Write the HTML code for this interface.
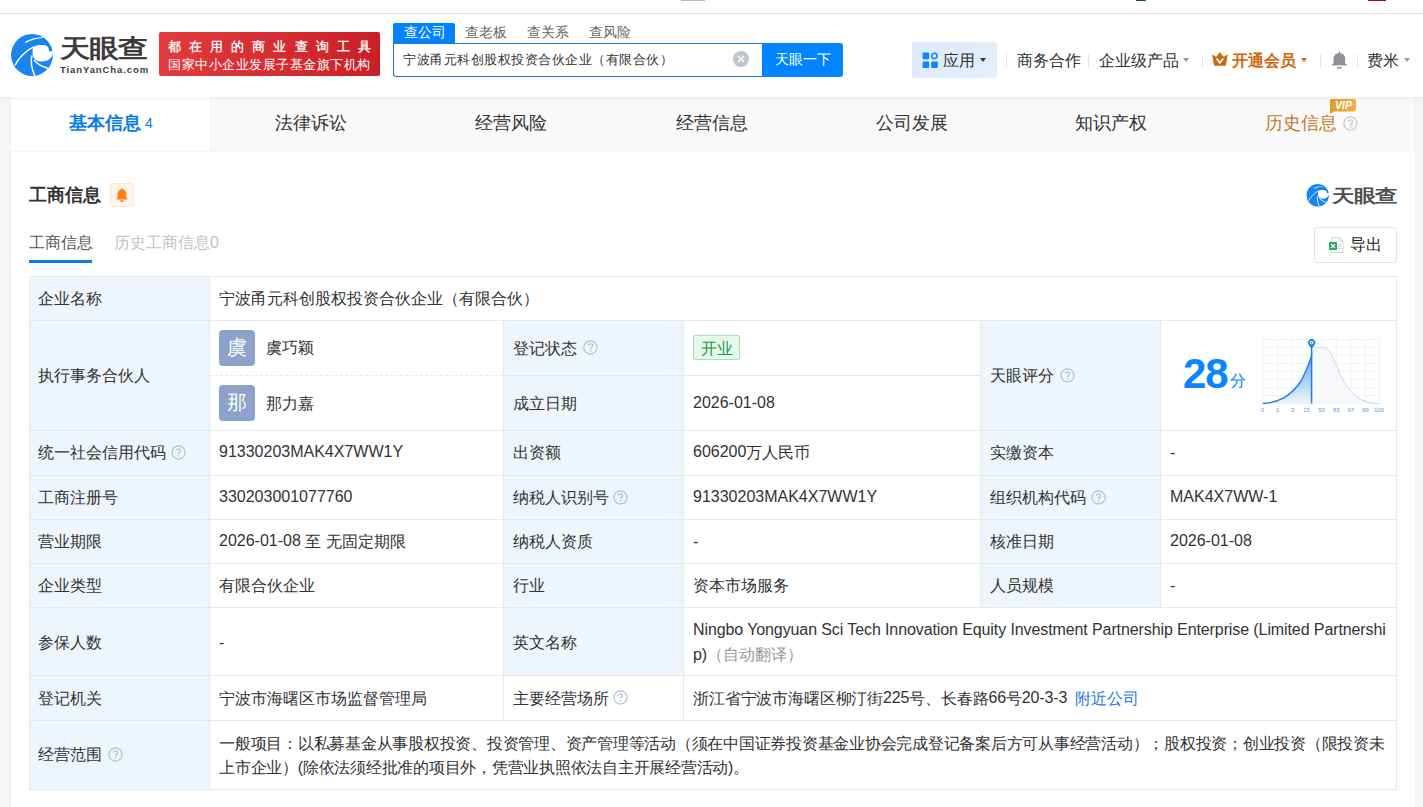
<!DOCTYPE html>
<html><head><meta charset="utf-8">
<style>
*{margin:0;padding:0;box-sizing:border-box}
html,body{width:1423px;height:807px;overflow:hidden;background:#f5f5f5;font-family:"Liberation Sans",sans-serif;color:#333}
.a{position:absolute;white-space:nowrap}
.l{position:relative;top:-1px}
#top{position:absolute;left:0;top:0;width:1423px;height:97px;background:#fff;box-shadow:0 1px 5px rgba(0,0,0,.07);z-index:2}
#topline{position:absolute;left:0;top:13px;width:1423px;height:1px;background:#e2e2e2}
</style></head><body>


<div id="top">
  <div id="topline"></div>
  <div class="a" style="left:681px;top:0;width:24px;height:1px;background:#bbb"></div>
  <div class="a" style="left:1136px;top:0;width:10px;height:1px;background:#1a5a1a"></div>
  <div class="a" style="left:1368px;top:0;width:18px;height:1px;background:#8a1515"></div>

  <!-- logo -->
  <svg class="a" style="left:10px;top:32px" width="45" height="45" viewBox="0 0 45 45">
<circle cx="22" cy="23" r="21" fill="#1a85f1"/>
<path d="M23.4 15 C26 13.2 31 12.7 35.7 13.4 C38 14 39.2 16.5 38.9 19.2 L45 19.2 L45 21.6 L43 21.7 C42 25.5 38.5 29 32.3 29.6 C28.5 29.9 25 28.5 23.4 25 C22.2 22.5 22.2 18 23.4 15 Z" fill="#fff"/>
<path d="M5 33.5 C8 27 15 19 23.6 14.8" fill="none" stroke="#fff" stroke-width="1.5"/>
<path d="M22 23.4 C21 27 21 35 24.8 44" fill="none" stroke="#fff" stroke-width="1.5"/>
<path d="M24 27.9 C26 30.5 31 34.5 38.5 36.5" fill="none" stroke="#fff" stroke-width="1.5"/>
<path d="M14.6 9.9 C20 6.8 27 5 34.2 5.2 L34 5.8 C27 6.3 21 8.3 15.8 11 Z" fill="#fff"/>
</svg>
  <div class="a" style="left:60px;top:35px;font-size:30px;line-height:32px;font-weight:bold;color:#3e3a39;letter-spacing:-1px;transform:scaleY(0.83);transform-origin:0 0">天眼查</div>
  <div class="a" style="left:60px;top:64px;font-size:9.5px;line-height:11px;font-weight:bold;color:#3e3a39;letter-spacing:0.9px">TianYanCha.com</div>

  <!-- red banner -->
  <div class="a" style="left:159px;top:32px;width:221px;height:44px;border-radius:2px;background:linear-gradient(90deg,#e33a40,#c91f26)"></div>
  <div class="a" style="left:168px;top:39px;font-size:13px;line-height:16px;color:#fff;letter-spacing:8.1px;-webkit-text-stroke:0.3px #fff">都在用的商业查询工具</div>
  <div class="a" style="left:168px;top:57px;font-size:13px;line-height:16px;color:#fff;letter-spacing:0.5px">国家中小企业发展子基金旗下机构</div>

  <!-- search tabs -->
  <div class="a" style="left:393px;top:23px;width:62px;height:21px;background:#0084ff;border-radius:2px 2px 0 0"></div>
  <div class="a" style="left:404px;top:24px;font-size:13.5px;line-height:18px;color:#fff">查公司</div>
  <div class="a" style="left:465px;top:24px;font-size:13.5px;line-height:18px;color:#666">查老板</div>
  <div class="a" style="left:527px;top:24px;font-size:13.5px;line-height:18px;color:#666">查关系</div>
  <div class="a" style="left:589px;top:24px;font-size:13.5px;line-height:18px;color:#666">查风险</div>
  <div class="a" style="left:393px;top:43px;width:372px;height:34px;border:1px solid #2676cc;border-right:none;border-radius:0 0 0 3px;background:#fff"></div>
  <div class="a" style="left:403px;top:50px;font-size:13px;line-height:20px;color:#333;letter-spacing:0.5px">宁波甬元科创股权投资合伙企业（有限合伙）</div>
  <svg class="a" style="left:733px;top:51px" width="16" height="16" viewBox="0 0 16 16"><circle cx="8" cy="8" r="8" fill="#c0c4cc"/><path d="M5 5L11 11M11 5L5 11" stroke="#fff" stroke-width="1.5"/></svg>
  <div class="a" style="left:762px;top:43px;width:81px;height:34px;background:#0084ff;border-radius:0 3px 3px 0"></div>
  <div class="a" style="left:775px;top:49px;font-size:14px;line-height:20px;color:#fff">天眼一下</div>

  <!-- right nav -->
  <div class="a" style="left:912px;top:42px;width:85px;height:36px;border-radius:3px;background:linear-gradient(160deg,#dbe9fb,#e6f0fc)"></div>
  <svg class="a" style="left:922px;top:52px" width="17" height="17" viewBox="0 0 17 17"><g transform="translate(0.6,0.6)" fill="#0a84ff">
    <rect x="0" y="0" width="6.6" height="6.6" rx="1.3"/>
    <circle cx="11.7" cy="3.3" r="2.65" fill="none" stroke="#0a84ff" stroke-width="1.5"/>
    <rect x="0" y="8.8" width="6.6" height="6.6" rx="1.3"/>
    <rect x="8.6" y="8.8" width="6.6" height="6.6" rx="1.3"/>
  </g></svg>
  <div class="a" style="left:943px;top:50px;font-size:16px;line-height:22px;color:#333">应用</div>
  <div class="a" style="left:980px;top:58px;width:0;height:0;border-left:3.5px solid transparent;border-right:3.5px solid transparent;border-top:4px solid #333"></div>
  <div class="a" style="left:1006px;top:54px;width:1px;height:13px;background:#e5e5e5"></div>
  <div class="a" style="left:1017px;top:50px;font-size:16px;line-height:22px;color:#333">商务合作</div>
  <div class="a" style="left:1088px;top:54px;width:1px;height:13px;background:#e5e5e5"></div>
  <div class="a" style="left:1099px;top:50px;font-size:16px;line-height:22px;color:#333">企业级产品</div>
  <div class="a" style="left:1183px;top:58px;width:0;height:0;border-left:3.5px solid transparent;border-right:3.5px solid transparent;border-top:4px solid #999"></div>
  <div class="a" style="left:1202px;top:54px;width:1px;height:13px;background:#e5e5e5"></div>
  <svg class="a" style="left:1212px;top:52px" width="16" height="14" viewBox="0 0 16 14">
    <path d="M0.4 3 L4.2 5.2 L7.8 0.4 L11.6 5.2 L15.4 3 L13.5 13.3 Q13.4 13.6 13 13.6 L2.9 13.6 Q2.5 13.6 2.4 13.3 Z" fill="#d0660c" stroke="#d0660c" stroke-width="0.6" stroke-linejoin="round"/>
    <path d="M4.6 6.6 L7.8 10.8 L11.2 6.6" stroke="#fff" stroke-width="1.7" fill="none"/>
  </svg>
  <div class="a" style="left:1232px;top:50px;font-size:16px;line-height:22px;color:#d0680c;font-weight:bold">开通会员</div>
  <div class="a" style="left:1301px;top:58px;width:0;height:0;border-left:3.5px solid transparent;border-right:3.5px solid transparent;border-top:4px solid #d0680c"></div>
  <div class="a" style="left:1320px;top:54px;width:1px;height:13px;background:#e5e5e5"></div>
  <svg class="a" style="left:1332px;top:51px" width="15" height="18" viewBox="0 0 15 18"><g fill="#8e9197">
    <path d="M1.5 13.2 L1.5 7.6 C1.5 4.2 4.1 1.9 7.35 1.9 C10.6 1.9 13.2 4.2 13.2 7.6 L13.2 13.2 Z"/>
    <rect x="0.1" y="12.9" width="14.6" height="1.5"/>
    <rect x="6.8" y="0.1" width="1.1" height="2.5"/>
    <rect x="5" y="15.9" width="4.7" height="1.7"/>
  </g></svg>
  <div class="a" style="left:1357px;top:54px;width:1px;height:13px;background:#e5e5e5"></div>
  <div class="a" style="left:1367px;top:50px;font-size:16px;line-height:22px;color:#333">费米</div>
  <div class="a" style="left:1404px;top:58px;width:0;height:0;border-left:3.5px solid transparent;border-right:3.5px solid transparent;border-top:4px solid #999"></div>
</div>

<!-- main tabs -->
<div class="a" style="left:11px;top:97px;width:1404px;height:710px;background:#fff;box-shadow:0 0 3px rgba(0,0,0,.05)"></div>
<div class="a" style="left:210px;top:97px;width:1205px;height:54px;background:#f9f9f9;border-left:1px solid #f0f0f0"></div>
<div class="a" style="left:11px;top:151px;width:1404px;height:1px;background:#f4f4f4"></div>

<div class="a" style="left:69px;top:111px;font-size:18px;line-height:24px;color:#0a7ce8;font-weight:bold">基本信息</div>
<div class="a" style="left:145px;top:114px;font-size:14px;line-height:18px;color:#0a7ce8">4</div>
<div class="a" style="left:275px;top:111px;font-size:18px;line-height:24px;color:#333">法律诉讼</div>
<div class="a" style="left:475px;top:111px;font-size:18px;line-height:24px;color:#333">经营风险</div>
<div class="a" style="left:676px;top:111px;font-size:18px;line-height:24px;color:#333">经营信息</div>
<div class="a" style="left:876px;top:111px;font-size:18px;line-height:24px;color:#333">公司发展</div>
<div class="a" style="left:1075px;top:111px;font-size:18px;line-height:24px;color:#333">知识产权</div>
<div class="a" style="left:1265px;top:111px;font-size:18px;line-height:24px;color:#c87a2a">历史信息</div>

<svg class="a" style="left:1328px;top:98px" width="29" height="17" viewBox="0 0 29 17"><defs><linearGradient id="vg" x1="0" y1="0" x2="1" y2="0"><stop offset="0" stop-color="#e49a2c"/><stop offset="1" stop-color="#f0b04a"/></linearGradient></defs><path d="M3 1 L26 1 Q28 1 28 3 L28 11 Q28 13.4 26 13.4 L6 13.4 L2 16 L2 3 Q2 1 3 1Z" fill="url(#vg)"/><text x="15.5" y="11.3" font-family="Liberation Sans" font-weight="bold" font-style="italic" font-size="10.5" fill="#fff" text-anchor="middle">VIP</text></svg>
<svg class="a" style="left:1343px;top:116px" width="15" height="15" viewBox="0 0 15 15"><circle cx="7.5" cy="7.5" r="6.6" fill="none" stroke="#c3c9d1" stroke-width="1.2"/><path d="M5.4 5.8C5.4 4.6 6.3 3.8 7.5 3.8C8.7 3.8 9.6 4.6 9.6 5.7C9.6 7.1 7.6 7.3 7.6 8.9" fill="none" stroke="#c3c9d1" stroke-width="1.2"/><circle cx="7.6" cy="10.9" r="0.8" fill="#c3c9d1"/></svg>
<!-- card -->

<div id="content">
<div class="a t" style="left:29px;top:183px;font-size:18px;line-height:24px;font-weight:bold;color:#333">工商信息</div>
<div class="a" style="left:110px;top:183px;width:24px;height:24px;border-radius:3px;background:#fff4ea;border:1px solid #fde7d4"></div>
<svg class="a" style="left:116px;top:188px" width="12" height="14" viewBox="0 0 12 14"><path d="M6 0.3C6.7 0.3 7 0.8 7 1.3C9.4 1.9 10.4 4 10.4 6.6L10.4 9.8L11.8 11.5L0.2 11.5L1.6 9.8L1.6 6.6C1.6 4 2.6 1.9 5 1.3C5 0.8 5.3 0.3 6 0.3Z" fill="#ff7f0a"/><path d="M4.2 12.3L7.8 12.3C7.8 13.3 7 13.9 6 13.9C5 13.9 4.2 13.3 4.2 12.3Z" fill="#ff7f0a"/></svg>
<svg class="a" style="left:1306px;top:183px" width="24" height="24" viewBox="0 0 45 45">
<circle cx="22" cy="23" r="21" fill="#1a85f1"/>
<path d="M23.4 15 C26 13.2 31 12.7 35.7 13.4 C38 14 39.2 16.5 38.9 19.2 L45 19.2 L45 21.6 L43 21.7 C42 25.5 38.5 29 32.3 29.6 C28.5 29.9 25 28.5 23.4 25 C22.2 22.5 22.2 18 23.4 15 Z" fill="#fff"/>
<path d="M5 33.5 C8 27 15 19 23.6 14.8" fill="none" stroke="#fff" stroke-width="1.5"/>
<path d="M22 23.4 C21 27 21 35 24.8 44" fill="none" stroke="#fff" stroke-width="1.5"/>
<path d="M24 27.9 C26 30.5 31 34.5 38.5 36.5" fill="none" stroke="#fff" stroke-width="1.5"/>
<path d="M14.6 9.9 C20 6.8 27 5 34.2 5.2 L34 5.8 C27 6.3 21 8.3 15.8 11 Z" fill="#fff"/>
</svg>
<div class="a t" style="left:1332px;top:183px;font-size:22px;line-height:26px;font-weight:bold;color:#505050;letter-spacing:-0.5px;transform:scaleY(0.8);transform-origin:0 50%">天眼查</div>
<div class="a t" style="left:29px;top:233px;font-size:16px;line-height:20px;color:#555">工商信息</div>
<div class="a" style="left:29px;top:260px;width:63px;height:3px;background:#0a7ce5"></div>
<div class="a t" style="left:114px;top:233px;font-size:16px;line-height:20px;color:#bfc1c6">历史工商信息0</div>
<div class="a" style="left:1314px;top:227px;width:83px;height:36px;border:1px solid #e1e4ea;border-radius:3px;background:#fff"></div>
<svg class="a" style="left:1328px;top:237px" width="16" height="16" viewBox="0 0 16 16"><path d="M3.5 0.5L11.5 0.5L15 4L15 15.5L3.5 15.5Z" fill="#fff" stroke="#d0d3d8"/><path d="M11.5 0.5L11.5 4L15 4" fill="none" stroke="#d0d3d8"/><rect x="10" y="7" width="3.5" height="1" fill="#d0d3d8"/><rect x="10" y="9" width="3.5" height="1" fill="#d0d3d8"/><rect x="10" y="11" width="3.5" height="1" fill="#d0d3d8"/><rect x="1" y="5" width="8" height="8" rx="0.8" fill="#2aa56a"/><path d="M3 7L7 11M7 7L3 11" stroke="#e8fff2" stroke-width="1.1"/></svg>
<div class="a t" style="left:1350px;top:235px;font-size:16px;line-height:20px;color:#222">导出</div>
<div class="a" style="left:29px;top:276px;width:180px;height:513px;background:#eef5fd"></div>
<div class="a" style="left:503px;top:320px;width:180px;height:355px;background:#eef5fd"></div>
<div class="a" style="left:980px;top:320px;width:180px;height:287px;background:#eef5fd"></div>
<div class="a" style="left:29px;top:276px;width:1368px;height:1px;background:#e4e9f0"></div>
<div class="a" style="left:29px;top:320px;width:1368px;height:1px;background:#e4e9f0"></div>
<div class="a" style="left:29px;top:430px;width:1368px;height:1px;background:#e4e9f0"></div>
<div class="a" style="left:29px;top:475px;width:1368px;height:1px;background:#e4e9f0"></div>
<div class="a" style="left:29px;top:519px;width:1368px;height:1px;background:#e4e9f0"></div>
<div class="a" style="left:29px;top:563px;width:1368px;height:1px;background:#e4e9f0"></div>
<div class="a" style="left:29px;top:607px;width:1368px;height:1px;background:#e4e9f0"></div>
<div class="a" style="left:29px;top:675px;width:1368px;height:1px;background:#e4e9f0"></div>
<div class="a" style="left:29px;top:720px;width:1368px;height:1px;background:#e4e9f0"></div>
<div class="a" style="left:29px;top:789px;width:1368px;height:1px;background:#e4e9f0"></div>
<div class="a" style="left:210px;top:375px;width:293px;height:0;border-top:1px dashed #e2e8ef"></div>
<div class="a" style="left:503px;top:375px;width:477px;height:1px;background:#e4e9f0"></div>
<div class="a" style="left:29px;top:276px;width:1px;height:514px;background:#e4e9f0"></div>
<div class="a" style="left:1396px;top:276px;width:1px;height:514px;background:#e4e9f0"></div>
<div class="a" style="left:209px;top:276px;width:1px;height:514px;background:#e4e9f0"></div>
<div class="a" style="left:503px;top:320px;width:1px;height:400px;background:#e4e9f0"></div>
<div class="a" style="left:683px;top:320px;width:1px;height:400px;background:#e4e9f0"></div>
<div class="a" style="left:980px;top:320px;width:1px;height:287px;background:#e4e9f0"></div>
<div class="a" style="left:1160px;top:320px;width:1px;height:287px;background:#e4e9f0"></div>
<div class="a t" style="left:38px;top:289px;font-size:16px;line-height:20px;color:#333">企业名称</div>
<div class="a t" style="left:219px;top:289px;font-size:16px;line-height:20px;color:#333">宁波甬元科创股权投资合伙企业（有限合伙）</div>
<div class="a t" style="left:38px;top:366px;font-size:16px;line-height:20px;color:#333">执行事务合伙人</div>
<div class="a" style="left:219px;top:330px;width:36px;height:36px;border-radius:4px;background:#8ca2cb"></div>
<div class="a t" style="left:227px;top:336px;font-size:20px;line-height:22px;color:#fff">虞</div>
<div class="a t" style="left:266px;top:338px;font-size:16px;line-height:20px;color:#333">虞巧颖</div>
<div class="a" style="left:219px;top:385px;width:36px;height:36px;border-radius:4px;background:#8ca2cb"></div>
<div class="a t" style="left:227px;top:391px;font-size:20px;line-height:22px;color:#fff">那</div>
<div class="a t" style="left:266px;top:394px;font-size:16px;line-height:20px;color:#333">那力嘉</div>
<div class="a t" style="left:513px;top:339px;font-size:16px;line-height:20px;color:#333">登记状态</div>
<svg class="a" style="left:583px;top:340px" width="15" height="15" viewBox="0 0 15 15"><circle cx="7.5" cy="7.5" r="6.6" fill="none" stroke="#abc0d6" stroke-width="1.2"/><path d="M5.4 5.8C5.4 4.6 6.3 3.8 7.5 3.8C8.7 3.8 9.6 4.6 9.6 5.7C9.6 7.1 7.6 7.3 7.6 8.9" fill="none" stroke="#abc0d6" stroke-width="1.2"/><circle cx="7.6" cy="10.9" r="0.8" fill="#abc0d6"/></svg>
<div class="a" style="left:693px;top:335px;width:47px;height:25px;border-radius:2px;background:#e5f8e9;border:1px solid #a7dfb6"></div>
<div class="a t" style="left:701px;top:339px;font-size:16px;line-height:20px;color:#1f9a48">开业</div>
<div class="a t" style="left:513px;top:394px;font-size:16px;line-height:20px;color:#333">成立日期</div>
<div class="a t" style="left:693px;top:394px;font-size:16px;line-height:20px;color:#333"><span class="l">2026-01-08</span></div>
<div class="a t" style="left:990px;top:366px;font-size:16px;line-height:20px;color:#333">天眼评分</div>
<svg class="a" style="left:1060px;top:368px" width="15" height="15" viewBox="0 0 15 15"><circle cx="7.5" cy="7.5" r="6.6" fill="none" stroke="#abc0d6" stroke-width="1.2"/><path d="M5.4 5.8C5.4 4.6 6.3 3.8 7.5 3.8C8.7 3.8 9.6 4.6 9.6 5.7C9.6 7.1 7.6 7.3 7.6 8.9" fill="none" stroke="#abc0d6" stroke-width="1.2"/><circle cx="7.6" cy="10.9" r="0.8" fill="#abc0d6"/></svg>
<div class="a t" style="left:1183px;top:352px;font-size:42px;line-height:44px;color:#0a84ff;font-weight:bold;letter-spacing:-1px">28</div>
<div class="a t" style="left:1230px;top:371px;font-size:16px;line-height:20px;color:#0a84ff">分</div>
<svg class="a" style="left:1258px;top:335px" width="130" height="80" viewBox="0 0 130 80">
<defs><linearGradient id="bg1" x1="0" y1="0" x2="0" y2="1"><stop offset="0" stop-color="#4597ef"/><stop offset="1" stop-color="#e8f2fd"/></linearGradient></defs>
<line x1="4.8" y1="4.5" x2="4.8" y2="68.5" stroke="#edf2f8" stroke-width="0.9"/><line x1="19.5" y1="4.5" x2="19.5" y2="68.5" stroke="#edf2f8" stroke-width="0.9"/><line x1="34.5" y1="4.5" x2="34.5" y2="68.5" stroke="#edf2f8" stroke-width="0.9"/><line x1="48.6" y1="4.5" x2="48.6" y2="68.5" stroke="#edf2f8" stroke-width="0.9"/><line x1="63.5" y1="4.5" x2="63.5" y2="68.5" stroke="#edf2f8" stroke-width="0.9"/><line x1="78.4" y1="4.5" x2="78.4" y2="68.5" stroke="#edf2f8" stroke-width="0.9"/><line x1="92.8" y1="4.5" x2="92.8" y2="68.5" stroke="#edf2f8" stroke-width="0.9"/><line x1="107.4" y1="4.5" x2="107.4" y2="68.5" stroke="#edf2f8" stroke-width="0.9"/><line x1="121.5" y1="4.5" x2="121.5" y2="68.5" stroke="#edf2f8" stroke-width="0.9"/><line x1="4.8" y1="4.5" x2="121.5" y2="4.5" stroke="#edf2f8" stroke-width="0.9"/><line x1="4.8" y1="12.4" x2="121.5" y2="12.4" stroke="#edf2f8" stroke-width="0.9"/><line x1="4.8" y1="20.3" x2="121.5" y2="20.3" stroke="#edf2f8" stroke-width="0.9"/><line x1="4.8" y1="28.5" x2="121.5" y2="28.5" stroke="#edf2f8" stroke-width="0.9"/><line x1="4.8" y1="36.4" x2="121.5" y2="36.4" stroke="#edf2f8" stroke-width="0.9"/><line x1="4.8" y1="44.3" x2="121.5" y2="44.3" stroke="#edf2f8" stroke-width="0.9"/><line x1="4.8" y1="52.6" x2="121.5" y2="52.6" stroke="#edf2f8" stroke-width="0.9"/><line x1="4.8" y1="60.5" x2="121.5" y2="60.5" stroke="#edf2f8" stroke-width="0.9"/><line x1="4.8" y1="68.5" x2="121.5" y2="68.5" stroke="#edf2f8" stroke-width="0.9"/>
<path d="M53.6 21.3 C55 17 57 13.5 60 12.6 C62 12 65 12 68 13.6 C71 15.5 73 18 75 22.5 C78 29 81 38 85 45 C89 52 95 60 104 65 C111 68 116 68.5 121.5 68.5 L53.6 68.5 Z" fill="#f6f7f9" opacity="0.7"/>
<path d="M53.6 21.3 C55 17 57 13.5 60 12.6 C62 12 65 12 68 13.6 C71 15.5 73 18 75 22.5 C78 29 81 38 85 45 C89 52 95 60 104 65 C111 68 116 68.5 121.5 68.5" fill="none" stroke="#cfd8e3" stroke-width="1"/>
<path d="M4.8 68.5 C12 68.2 18 66.8 26 62.8 C34 58 39 52 43 46 C47 39 50 31 53.6 21.3 L53.6 68.5 Z" fill="url(#bg1)" opacity="0.8"/>
<path d="M4.8 68.5 C12 68.2 18 66.8 26 62.8 C34 58 39 52 43 46 C47 39 50 31 53.6 21.3" fill="none" stroke="#1a7ee8" stroke-width="1.4"/>
<line x1="53.6" y1="12" x2="53.6" y2="68.5" stroke="#1a7ee8" stroke-width="1.5"/>
<path d="M53.6 14 L50.6 9.8 A3.7 3.7 0 1 1 56.6 9.8 Z" fill="#1a7ee8"/>
<circle cx="53.6" cy="7.6" r="1.9" fill="#fff"/>
<circle cx="53.6" cy="7.6" r="0.9" fill="#1a7ee8"/>
<g font-family="Liberation Sans" font-size="6" fill="#5a9be2" text-anchor="middle">
<text x="4.5" y="77">0</text><text x="19.5" y="77">1</text><text x="34.5" y="77">3</text><text x="48.6" y="77">15</text><text x="63.5" y="77">50</text><text x="78.4" y="77">85</text><text x="92.8" y="77">97</text><text x="107.4" y="77">99</text><text x="121" y="77">100</text>
</g></svg>
<div class="a t" style="left:38px;top:443px;font-size:16px;line-height:20px;color:#333">统一社会信用代码</div>
<div class="a t" style="left:219px;top:443px;font-size:16px;line-height:20px;color:#333"><span class="l">91330203MAK4X7WW1Y</span></div>
<div class="a t" style="left:513px;top:443px;font-size:16px;line-height:20px;color:#333">出资额</div>
<div class="a t" style="left:693px;top:443px;font-size:16px;line-height:20px;color:#333"><span class="l">606200</span>万人民币</div>
<div class="a t" style="left:990px;top:443px;font-size:16px;line-height:20px;color:#333">实缴资本</div>
<div class="a t" style="left:1170px;top:443px;font-size:16px;line-height:20px;color:#333">-</div>
<svg class="a" style="left:171px;top:445px" width="15" height="15" viewBox="0 0 15 15"><circle cx="7.5" cy="7.5" r="6.6" fill="none" stroke="#abc0d6" stroke-width="1.2"/><path d="M5.4 5.8C5.4 4.6 6.3 3.8 7.5 3.8C8.7 3.8 9.6 4.6 9.6 5.7C9.6 7.1 7.6 7.3 7.6 8.9" fill="none" stroke="#abc0d6" stroke-width="1.2"/><circle cx="7.6" cy="10.9" r="0.8" fill="#abc0d6"/></svg>
<div class="a t" style="left:38px;top:488px;font-size:16px;line-height:20px;color:#333">工商注册号</div>
<div class="a t" style="left:219px;top:488px;font-size:16px;line-height:20px;color:#333"><span class="l">330203001077760</span></div>
<div class="a t" style="left:513px;top:488px;font-size:16px;line-height:20px;color:#333">纳税人识别号</div>
<div class="a t" style="left:693px;top:488px;font-size:16px;line-height:20px;color:#333"><span class="l">91330203MAK4X7WW1Y</span></div>
<div class="a t" style="left:990px;top:488px;font-size:16px;line-height:20px;color:#333">组织机构代码</div>
<div class="a t" style="left:1170px;top:488px;font-size:16px;line-height:20px;color:#333"><span class="l">MAK4X7WW-1</span></div>
<svg class="a" style="left:613px;top:490px" width="15" height="15" viewBox="0 0 15 15"><circle cx="7.5" cy="7.5" r="6.6" fill="none" stroke="#abc0d6" stroke-width="1.2"/><path d="M5.4 5.8C5.4 4.6 6.3 3.8 7.5 3.8C8.7 3.8 9.6 4.6 9.6 5.7C9.6 7.1 7.6 7.3 7.6 8.9" fill="none" stroke="#abc0d6" stroke-width="1.2"/><circle cx="7.6" cy="10.9" r="0.8" fill="#abc0d6"/></svg>
<svg class="a" style="left:1091px;top:490px" width="15" height="15" viewBox="0 0 15 15"><circle cx="7.5" cy="7.5" r="6.6" fill="none" stroke="#abc0d6" stroke-width="1.2"/><path d="M5.4 5.8C5.4 4.6 6.3 3.8 7.5 3.8C8.7 3.8 9.6 4.6 9.6 5.7C9.6 7.1 7.6 7.3 7.6 8.9" fill="none" stroke="#abc0d6" stroke-width="1.2"/><circle cx="7.6" cy="10.9" r="0.8" fill="#abc0d6"/></svg>
<div class="a t" style="left:38px;top:532px;font-size:16px;line-height:20px;color:#333">营业期限</div>
<div class="a t" style="left:219px;top:532px;font-size:16px;line-height:20px;color:#333"><span class="l">2026-01-08</span> 至 无固定期限</div>
<div class="a t" style="left:513px;top:532px;font-size:16px;line-height:20px;color:#333">纳税人资质</div>
<div class="a t" style="left:693px;top:532px;font-size:16px;line-height:20px;color:#333">-</div>
<div class="a t" style="left:990px;top:532px;font-size:16px;line-height:20px;color:#333">核准日期</div>
<div class="a t" style="left:1170px;top:532px;font-size:16px;line-height:20px;color:#333"><span class="l">2026-01-08</span></div>
<div class="a t" style="left:38px;top:576px;font-size:16px;line-height:20px;color:#333">企业类型</div>
<div class="a t" style="left:219px;top:576px;font-size:16px;line-height:20px;color:#333">有限合伙企业</div>
<div class="a t" style="left:513px;top:576px;font-size:16px;line-height:20px;color:#333">行业</div>
<div class="a t" style="left:693px;top:576px;font-size:16px;line-height:20px;color:#333">资本市场服务</div>
<div class="a t" style="left:990px;top:576px;font-size:16px;line-height:20px;color:#333">人员规模</div>
<div class="a t" style="left:1170px;top:576px;font-size:16px;line-height:20px;color:#333">-</div>
<div class="a t" style="left:38px;top:633px;font-size:16px;line-height:20px;color:#333">参保人数</div>
<div class="a t" style="left:219px;top:633px;font-size:16px;line-height:20px;color:#333">-</div>
<div class="a t" style="left:513px;top:633px;font-size:16px;line-height:20px;color:#333">英文名称</div>
<div class="a t" style="left:693px;top:617px;font-size:16px;line-height:25px;color:#333;letter-spacing:-0.1px">Ningbo Yongyuan Sci Tech Innovation Equity Investment Partnership Enterprise (Limited Partnershi<br>p)<span style="color:#999">（自动翻译）</span></div>
<div class="a t" style="left:38px;top:689px;font-size:16px;line-height:20px;color:#333">登记机关</div>
<div class="a t" style="left:219px;top:689px;font-size:16px;line-height:20px;color:#333">宁波市海曙区市场监督管理局</div>
<div class="a t" style="left:513px;top:689px;font-size:16px;line-height:20px;color:#333">主要经营场所</div>
<div class="a t" style="left:693px;top:689px;font-size:16px;line-height:20px;color:#333;letter-spacing:-0.16px">浙江省宁波市海曙区柳汀街<span class="l">225</span>号、长春路<span class="l">66</span>号<span class="l">20-3-3</span></div>
<svg class="a" style="left:613px;top:690px" width="15" height="15" viewBox="0 0 15 15"><circle cx="7.5" cy="7.5" r="6.6" fill="none" stroke="#abc0d6" stroke-width="1.2"/><path d="M5.4 5.8C5.4 4.6 6.3 3.8 7.5 3.8C8.7 3.8 9.6 4.6 9.6 5.7C9.6 7.1 7.6 7.3 7.6 8.9" fill="none" stroke="#abc0d6" stroke-width="1.2"/><circle cx="7.6" cy="10.9" r="0.8" fill="#abc0d6"/></svg>
<div class="a t" style="left:1075px;top:689px;font-size:16px;line-height:20px;color:#1a7be0">附近公司</div>
<div class="a t" style="left:38px;top:745px;font-size:16px;line-height:20px;color:#333">经营范围</div>
<svg class="a" style="left:108px;top:747px" width="15" height="15" viewBox="0 0 15 15"><circle cx="7.5" cy="7.5" r="6.6" fill="none" stroke="#abc0d6" stroke-width="1.2"/><path d="M5.4 5.8C5.4 4.6 6.3 3.8 7.5 3.8C8.7 3.8 9.6 4.6 9.6 5.7C9.6 7.1 7.6 7.3 7.6 8.9" fill="none" stroke="#abc0d6" stroke-width="1.2"/><circle cx="7.6" cy="10.9" r="0.8" fill="#abc0d6"/></svg>
<div class="a t" style="left:219px;top:732px;font-size:16px;line-height:24px;color:#333;letter-spacing:-0.25px">一般项目：以私募基金从事股权投资、投资管理、资产管理等活动（须在中国证券投资基金业协会完成登记备案后方可从事经营活动）；股权投资；创业投资（限投资未<br>上市企业）(除依法须经批准的项目外，凭营业执照依法自主开展经营活动)。</div>
</div>
</body></html>
